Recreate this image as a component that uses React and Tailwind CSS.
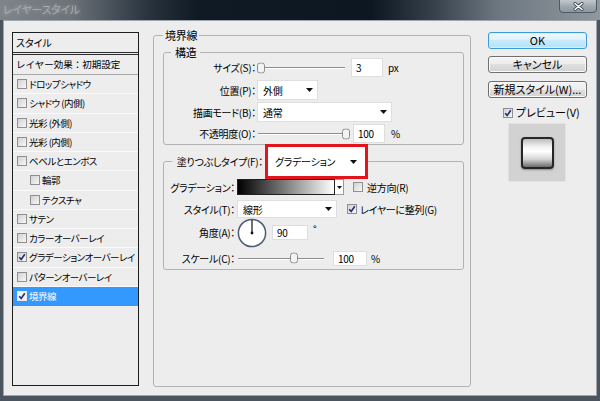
import React from "react";

const jp = "font-['Noto_Sans_CJK_JP','Noto_Sans',sans-serif] [font-feature-settings:'palt'] whitespace-nowrap";

function Arrow() {
  return (
    <svg width="7" height="4" viewBox="0 0 7 4" className="shrink-0">
      <path d="M0 0H7L3.5 4Z" fill="#111" />
    </svg>
  );
}

function Check({ checked, variant }) {
  const box =
    variant === "sel"
      ? "border-[#e8e8e8] bg-[#f4f4f4]"
      : "border-[#8f8f8f] bg-[linear-gradient(135deg,#d2d2d2,#f7f7f7)]";
  return (
    <span className={"flex items-center justify-center w-[10px] h-[10px] shrink-0 border " + box}>
      {checked && (
        <svg width="8" height="8" viewBox="0 0 8 8">
          <path d="M1.2 4.2 L3.2 6.4 L6.8 1.2" stroke="#1f2f7a" strokeWidth="1.6" fill="none" />
        </svg>
      )}
    </span>
  );
}

function Slider({ className, pos }) {
  return (
    <div className={"relative flex items-center h-full " + className}>
      <div className="ml-[1px] mr-[5px] flex-1 h-px bg-[#8e8e8e] shadow-[0_1px_0_#ffffff]" />
      <svg
        width="8"
        height="11"
        viewBox="0 0 8 11"
        className="absolute top-1/2 -translate-y-1/2"
        style={{ left: pos }}
      >
        <rect x="0.5" y="0.5" width="7" height="10" rx="2.5" fill="#f3f3f3" stroke="#8a8a8a" />
      </svg>
    </div>
  );
}

function Field({ className, children }) {
  return (
    <div className={"flex items-center bg-white border border-[#dedede] pl-[4px] text-[10px] " + className}>
      {children}
    </div>
  );
}

function Select({ className, text }) {
  return (
    <div className={"flex items-center bg-white border border-[#dedede] pl-[5px] pr-[4px] " + className}>
      <span>{text}</span>
      <span className="ml-auto flex">
        <Arrow />
      </span>
    </div>
  );
}

function Btn({ children, primary, className }) {
  return (
    <div
      className={
        "h-[17px] w-[99px] flex items-center justify-center rounded-[3px] border text-[11px] leading-none " +
        (primary
          ? "border-[#3c9bd6] bg-[linear-gradient(#eef8fd,#dcf1fc_50%,#c7e9fb_50%,#b5e1f8)] shadow-[inset_0_0_0_1px_#d6effb] "
          : "border-[#707070] bg-[linear-gradient(#f4f4f4,#ececec_50%,#dfdfdf_50%,#d2d2d2)] shadow-[inset_0_0_0_1px_#fafafa] ") +
        (className || "")
      }
    >
      {children}
    </div>
  );
}

const rows = [
  { t: "ドロップシャドウ" },
  { t: "シャドウ (内側)" },
  { t: "光彩 (外側)" },
  { t: "光彩 (内側)" },
  { t: "ベベルとエンボス" },
  { t: "輪郭", indent: true },
  { t: "テクスチャ", indent: true },
  { t: "サテン" },
  { t: "カラーオーバーレイ" },
  { t: "グラデーションオーバーレイ", checked: true },
  { t: "パターンオーバーレイ" },
  { t: "境界線", checked: true, sel: true },
];

function StyleList() {
  return (
    <div className="ml-[8px] mt-[11px] w-[127px] h-[354px] border border-[#1e1e1e] bg-[#ededed] flex flex-col text-[9.5px] tracking-[-0.5px] overflow-hidden">
      <div className="h-[19px] pl-[3px] flex items-center text-[10px] tracking-normal">スタイル</div>
      <div className="h-[3px] border-y border-[#2a2a2a]" />
      <div className="h-[20px] pl-[3px] flex items-center border-b border-[#a8a8a8] text-[9.5px] tracking-normal [font-feature-settings:normal]">
        レイヤー効果：初期設定
      </div>
      {rows.map((r) => (
        <div
          key={r.t}
          className={
            "h-[19.25px] flex items-center border-b " +
            (r.indent ? "pl-[17px] " : "pl-[4px] ") +
            (r.sel ? "bg-[#3399ff] text-white border-[#3399ff]" : "border-[#fafafa]")
          }
        >
          <Check checked={r.checked} variant={r.sel ? "sel" : ""} />
          <span className="ml-[2px]">{r.t}</span>
        </div>
      ))}
    </div>
  );
}

function AngleDial() {
  return (
    <svg width="30" height="30" viewBox="0 0 30 30" className="shrink-0">
      <circle cx="15" cy="15" r="13.6" fill="#ffffff" stroke="#4d5a78" strokeWidth="1.5" />
      <line x1="15" y1="15" x2="15" y2="2" stroke="#111" strokeWidth="1.2" />
      <circle cx="15" cy="15" r="1.4" fill="#111" />
    </svg>
  );
}

function Middle() {
  return (
    <fieldset className="ml-[14px] mt-[7px] w-[318px] h-[359px] border border-[#b2b2b2] rounded-[3px] pl-[9px] pr-[6px] text-[10px] tracking-[-0.3px]">
      <legend className="px-[2px] leading-[14px] text-[11px]">境界線</legend>

      <fieldset className="mt-[4px] w-[301px] border border-[#b2b2b2] rounded-[3px] pb-[1px]">
        <legend className="ml-[7px] px-[4px] leading-[12px] text-[11px]">構造</legend>
        <div className="flex flex-col">
          <div className="flex items-center h-[19px]">
            <span className="w-[93px] text-right pr-[1px]">サイズ(S)：</span>
            <Slider className="w-[93px]" pos={0} />
            <Field className="ml-[1px] w-[32px] h-[19px]">3</Field>
            <span className="ml-[5px]">px</span>
          </div>
          <div className="flex items-center h-[20px] mt-[3px]">
            <span className="w-[93px] text-right pr-[1px]">位置(P)：</span>
            <Select className="w-[61px] h-[20px]" text="外側" />
          </div>
          <div className="flex items-center h-[20px] mt-[2px]">
            <span className="w-[93px] text-right pr-[1px]">描画モード(B)：</span>
            <Select className="w-[135px] h-[20px]" text="通常" />
          </div>
          <div className="flex items-center h-[19px] mt-[2px]">
            <span className="w-[93px] text-right pr-[1px]">不透明度(O)：</span>
            <Slider className="w-[93px]" pos={85} />
            <Field className="ml-[3px] w-[32px] h-[19px]">100</Field>
            <span className="ml-[6px]">%</span>
          </div>
        </div>
      </fieldset>

      <fieldset className="-mt-[1px] w-[301px] border border-[#b2b2b2] rounded-[3px] pb-[3px]">
        <legend className="ml-[8px] flex items-center">
          <span className="w-[93px] text-right pr-[2px]">塗りつぶしタイプ(F)：</span>
          <div className="w-[103px] h-[35px] border-[3px] border-[#e2141c] bg-white flex items-center pl-[7px] pr-[8px]">
            <span>グラデーション</span>
            <span className="ml-auto flex">
              <Arrow />
            </span>
          </div>
        </legend>
        <div className="flex flex-col">
          <div className="flex items-center h-[16px]">
            <span className="w-[73px] text-right pr-[2px]">グラデーション：</span>
            <div className="w-[98px] h-[16px] border border-[#202020] bg-[linear-gradient(90deg,#000000,#ffffff)]" />
            <div className="w-[9px] h-[16px] border border-l-0 border-[#9a9a9a] bg-white flex items-center justify-center">
              <svg width="5" height="3" viewBox="0 0 5 3">
                <path d="M0 0H5L2.5 3Z" fill="#111" />
              </svg>
            </div>
            <span className="ml-[9px]">
              <Check />
            </span>
            <span className="ml-[4px]">逆方向(R)</span>
          </div>
          <div className="flex items-center h-[18px] mt-[5px]">
            <span className="w-[73px] text-right pr-[2px]">スタイル(T)：</span>
            <Select className="w-[100px] h-[18px]" text="線形" />
            <span className="ml-[10px]">
              <Check checked />
            </span>
            <span className="ml-[3px]">レイヤーに整列(G)</span>
          </div>
          <div className="flex items-center h-[29px]">
            <span className="w-[73px] text-right pr-[2px]">角度(A)：</span>
            <AngleDial />
            <Field className="ml-[5px] w-[36px] h-[15px]">90</Field>
            <span className="ml-[5px] leading-none self-start mt-[6px]">°</span>
          </div>
          <div className="flex items-center h-[16px] mt-[3px]">
            <span className="w-[73px] text-right pr-[2px]">スケール(C)：</span>
            <Slider className="w-[92px]" pos={53} />
            <Field className="ml-[4px] w-[34px] h-[15px]">100</Field>
            <span className="ml-[4px]">%</span>
          </div>
        </div>
      </fieldset>
    </fieldset>
  );
}

function RightCol() {
  return (
    <div className="ml-[17px] mt-[11px] w-[99px] flex flex-col text-[11px]">
      <Btn primary>OK</Btn>
      <Btn className="mt-[7px]">キャンセル</Btn>
      <Btn className="mt-[8px]">新規スタイル(W)...</Btn>
      <div className="mt-[9px] h-[11px] flex items-center pl-[15px]">
        <Check checked />
        <span className="ml-[3px] leading-none">プレビュー(V)</span>
      </div>
      <div className="mt-[5px] ml-[20px] w-[58px] h-[59px] bg-[#d2d2d2] border border-[#e2e2e2] flex items-center justify-center">
        <div className="w-[33px] h-[32px] rounded-[4px] border-[2px] border-[#262626] shadow-[0_1px_2px_rgba(0,0,0,0.35)] bg-[linear-gradient(180deg,#bcbcbc_0%,#f2f2f2_28%,#ffffff_45%,#d4d4d4_72%,#6c6c6c_100%)]" />
      </div>
    </div>
  );
}

export default function App() {
  return (
    <div className={"w-[600px] h-[401px] overflow-hidden bg-[#4a5560] flex flex-col text-black " + jp}>
      <div className="h-[20px] shrink-0 flex items-start bg-[linear-gradient(90deg,#7f8489_0%,#6b7278_12%,#27323d_25%,#0f1a25_33%,#0c1722_62%,#35404b_72%,#6d7780_83%,#8f989e_100%)]">
        <span className="ml-[3px] mt-[2px] text-[11px] tracking-[-0.3px] leading-[15px] text-[#a6abb0] [text-shadow:0_0_4px_rgba(255,255,255,0.35)]">
          レイヤースタイル
        </span>
        <div className="ml-auto mr-[3px] w-[38px] h-[14px] -mt-px rounded-b-[4px] border border-[#4e5962] bg-[linear-gradient(180deg,#c2c8cd,#9ea7ae_55%,#8d979f)] flex items-center justify-center">
          <svg width="11" height="9" viewBox="0 0 11 9">
            <path d="M2 1.5 L9 7.5 M9 1.5 L2 7.5" stroke="#3a4450" strokeWidth="3" strokeLinecap="round" />
            <path d="M2 1.5 L9 7.5 M9 1.5 L2 7.5" stroke="#ffffff" strokeWidth="1.6" strokeLinecap="round" />
          </svg>
        </div>
      </div>
      <div className="mx-[3px] h-[376px] shrink-0 bg-[#ededed] border border-[#9ea7af] flex items-start">
        <StyleList />
        <Middle />
        <RightCol />
      </div>
    </div>
  );
}
